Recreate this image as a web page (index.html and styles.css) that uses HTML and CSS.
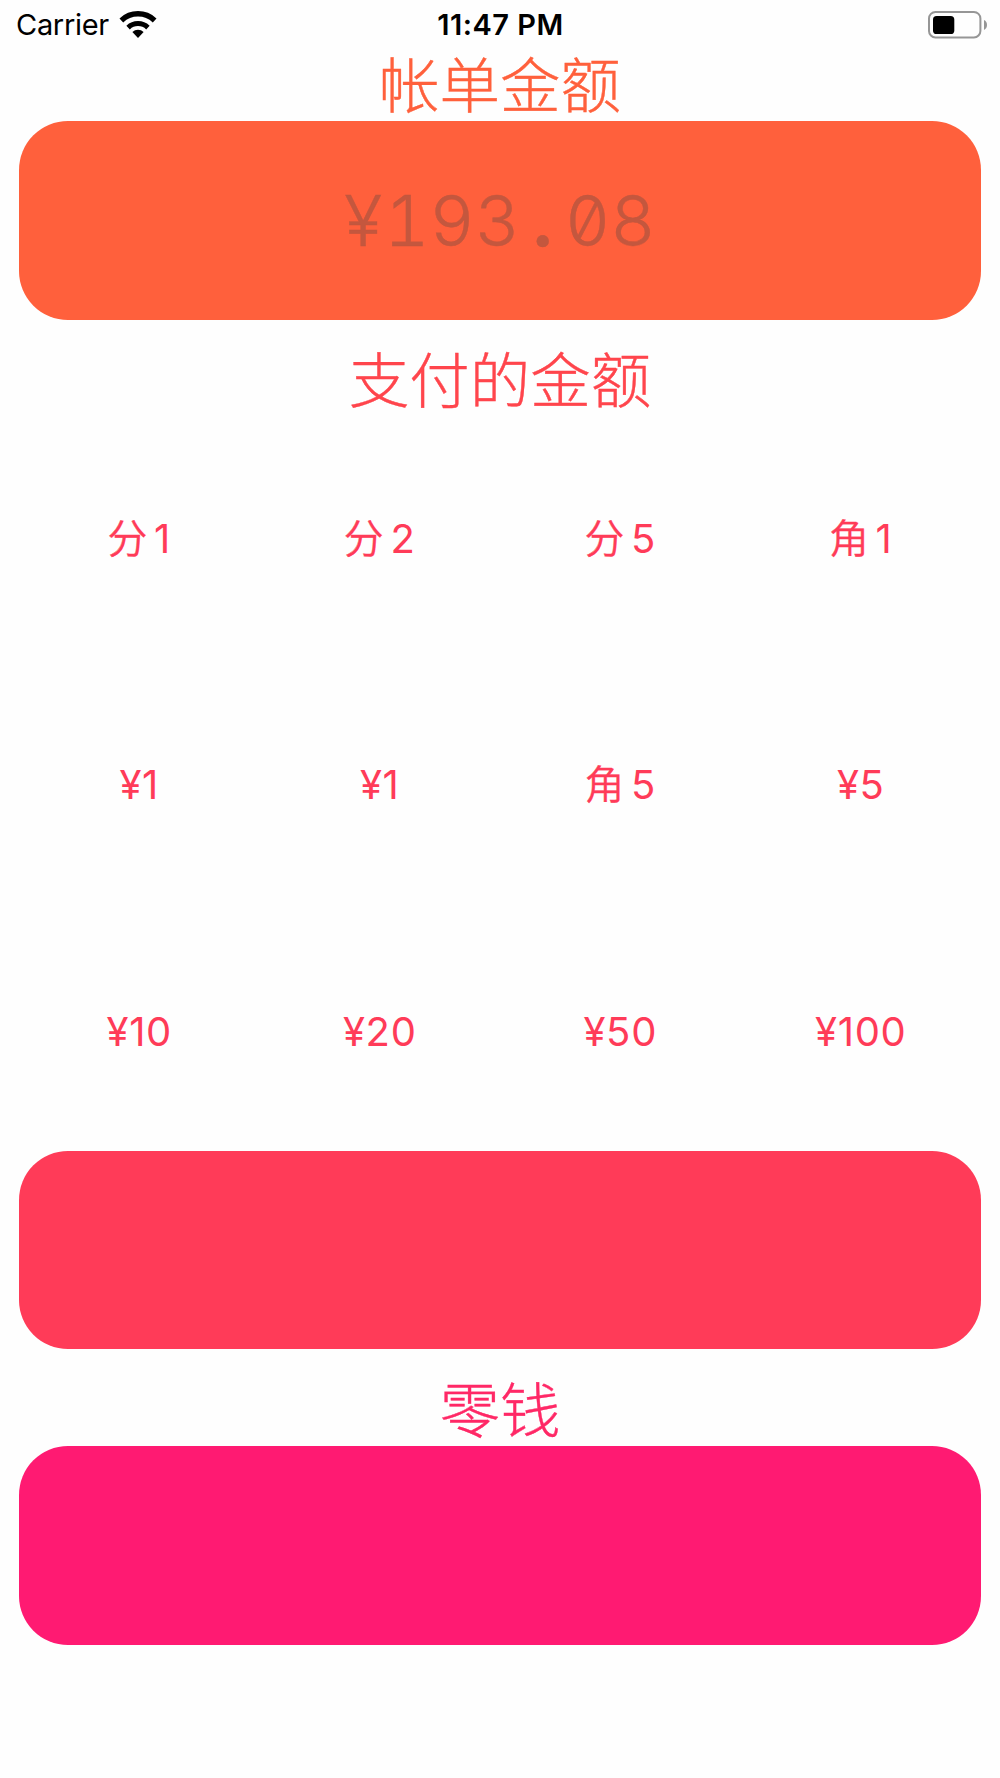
FILE: index.html
```html
<!DOCTYPE html>
<html lang="zh-CN">
  <head>
    <meta charset="UTF-8" />
    <meta name="viewport" content="width=device-width, initial-scale=1.0" />
    <title>零钱</title>
    <link rel="stylesheet" href="styles.css">
  </head>

  <body>
    <header class="status-bar">
      <div class="carrier">
        <span>Carrier</span>
        <svg class="wifi" viewBox="0 0 38 30">
          <path d="M2.35 10.45 A24.2 24.2 0 0 1 35.65 10.45" fill="none" stroke="#000" stroke-width="5.4" />
          <path d="M9.1 17.56 A14.4 14.4 0 0 1 28.9 17.56" fill="none" stroke="#000" stroke-width="5" />
          <path d="M13.4 22.05 A8.2 8.2 0 0 1 24.6 22.05 L19 28 Z" />
        </svg>
      </div>
      <div class="time">11:47 PM</div>
      <svg class="battery" viewBox="0 0 60 28">
        <rect x="1" y="1" width="51.4" height="25.4" rx="6.5" fill="none" stroke="#969696" stroke-width="2" />
        <rect x="5" y="5" width="21.3" height="18" rx="3.6" />
        <path d="M56 9 Q59 10.5 59 13.9 Q59 17.2 56 19 Z" fill="#969696" />
      </svg>
    </header>

    <main>
      <h2 class="bill-title">帐单金额</h2>
      <div class="box bill">
        <div class="amount"><span class="yen">¥</span>193<span class="point">.</span>08</div>
      </div>

      <h2 class="paid-title">支付的金额</h2>
      <div class="money">
        <button><span class="unit">分</span>1</button>
        <button><span class="unit">分</span>2</button>
        <button><span class="unit">分</span>5</button>
        <button><span class="unit">角</span>1</button>
        <button>¥1</button>
        <button>¥1</button>
        <button><span class="unit">角</span>5</button>
        <button>¥5</button>
        <button>¥10</button>
        <button>¥20</button>
        <button>¥50</button>
        <button>¥100</button>
      </div>
      <div class="box paid"></div>

      <h2 class="change-title">零钱</h2>
      <div class="box change"></div>
    </main>
  </body>
</html>
```
FILE: styles.css
```css
body {
  margin: 0;
  background-color: #fefefe;
  font-family: Inter, "Noto Sans CJK SC", sans-serif;
}
.status-bar {
  display: grid;
  grid-template-columns: 1fr auto 1fr;
  align-items: center;
  height: 49px;
  padding: 0 12px 0 16px;
  margin-bottom: 1px;
  font-size: 29px;
  line-height: 35px;
}
.carrier {
  display: flex;
  align-items: center;
  gap: 10px;
  letter-spacing: -0.3px;
}
.wifi {
  width: 38px;
  height: 30px;
}
.time {
  margin-right: 3px;
  font-weight: 600;
  letter-spacing: 0.5px;
}
.battery {
  justify-self: end;
  width: 60px;
  height: 28px;
}
main {
  padding: 0 19px;
}
h2 {
  margin: 0;
  height: 71px;
  font-family: "Noto Sans CJK SC", sans-serif;
  font-size: 60.5px;
  font-weight: 300;
  line-height: 63px;
  text-align: center;
  -webkit-text-stroke: 0.4px;
}
.bill-title {
  color: #ff603c;
}
.paid-title {
  margin-top: 25px;
  color: #ff454c;
}
.change-title {
  margin-top: 26px;
  color: #ff2866;
}
.box {
  display: flex;
  align-items: center;
  justify-content: center;
  height: 198.5px;
  border-radius: 49px;
}
.bill {
  background-color: #ff603c;
}
.paid {
  background-color: #ff3b58;
}
.change {
  background-color: #ff1a72;
}
.amount {
  color: #c4573e;
  font-size: 70px;
  font-weight: 300;
  font-feature-settings: "tnum", "zero";
  -webkit-text-stroke: 0.4px;
}
.yen {
  margin-right: 2px;
}
.point {
  display: inline-block;
  width: 45px;
  font-weight: 700;
  text-align: center;
}
.money {
  display: grid;
  grid-template-columns: repeat(4, 1fr);
  grid-template-rows: repeat(3, 246.5px);
  height: 735px;
}
button {
  padding: 0;
  border: 0;
  background: none;
  color: #ff3b58;
  font-family: Inter, "Noto Sans CJK SC", sans-serif;
  font-size: 40px;
  line-height: 48px;
  letter-spacing: 0.7px;
}
.unit {
  margin-right: 6px;
  font-weight: 350;
  line-height: 1;
  -webkit-text-stroke: 0.3px;
}
```
